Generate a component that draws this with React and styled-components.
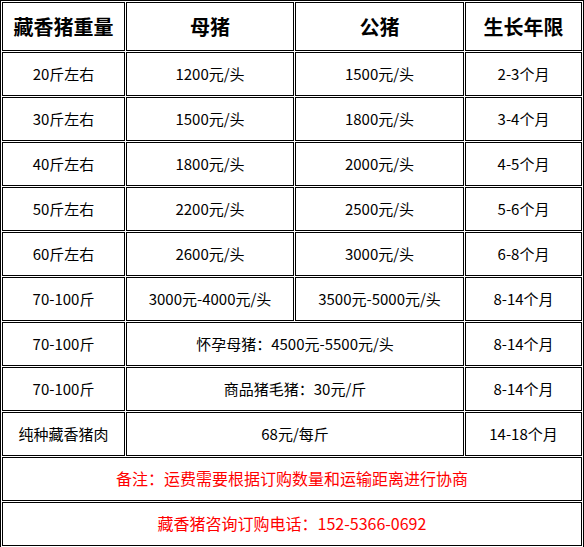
import React from "react";
import styled, { createGlobalStyle } from "styled-components";

const GlobalStyle = createGlobalStyle`
  html, body {
    margin: 0;
    padding: 0;
    background: #fff;
  }
`;

const Table = styled.table`
  width: 584px;
  table-layout: fixed;
  border-collapse: separate;
  border-spacing: 1px;
  border: 1px solid #000;
  font-family: "Noto Sans CJK SC", "Liberation Serif", sans-serif;
  color: #000;
`;

const HeadCell = styled.th`
  height: 47px;
  padding: 0;
  border: 1px solid #000;
  font-size: 20px;
  font-weight: 700;
  line-height: 1.2;
  text-align: center;
  vertical-align: middle;
`;

const Cell = styled.td`
  height: 42px;
  padding: 0;
  border: 1px solid #000;
  font-size: 15px;
  line-height: 1.2;
  text-align: center;
  vertical-align: middle;
`;

const NoteCell = styled(Cell)`
  color: #ff0000;
  font-size: 16px;
`;

const columns = [123, 168, 169, 117];
const heads = ["藏香猪重量", "母猪", "公猪", "生长年限"];

const rows = [
  ["20斤左右", "1200元/头", "1500元/头", "2-3个月"],
  ["30斤左右", "1500元/头", "1800元/头", "3-4个月"],
  ["40斤左右", "1800元/头", "2000元/头", "4-5个月"],
  ["50斤左右", "2200元/头", "2500元/头", "5-6个月"],
  ["60斤左右", "2600元/头", "3000元/头", "6-8个月"],
  ["70-100斤", "3000元-4000元/头", "3500元-5000元/头", "8-14个月"],
  ["70-100斤", "怀孕母猪：4500元-5500元/头", null, "8-14个月"],
  ["70-100斤", "商品猪毛猪：30元/斤", null, "8-14个月"],
  ["纯种藏香猪肉", "68元/每斤", null, "14-18个月"],
];

const notes = [
  "备注：运费需要根据订购数量和运输距离进行协商",
  "藏香猪咨询订购电话：152-5366-0692",
];

const App = () => (
  <>
    <GlobalStyle />
    <Table>
      <colgroup>
        {columns.map((w, i) => (
          <col key={i} style={{ width: w }} />
        ))}
      </colgroup>
      <thead>
        <tr>
          {heads.map((h) => (
            <HeadCell key={h}>{h}</HeadCell>
          ))}
        </tr>
      </thead>
      <tbody>
        {rows.map((r, i) => (
          <tr key={i}>
            <Cell>{r[0]}</Cell>
            {r[2] === null ? (
              <Cell colSpan={2}>{r[1]}</Cell>
            ) : (
              <>
                <Cell>{r[1]}</Cell>
                <Cell>{r[2]}</Cell>
              </>
            )}
            <Cell>{r[3]}</Cell>
          </tr>
        ))}
        {notes.map((n) => (
          <tr key={n}>
            <NoteCell colSpan={4}>{n}</NoteCell>
          </tr>
        ))}
      </tbody>
    </Table>
  </>
);

export default App;
